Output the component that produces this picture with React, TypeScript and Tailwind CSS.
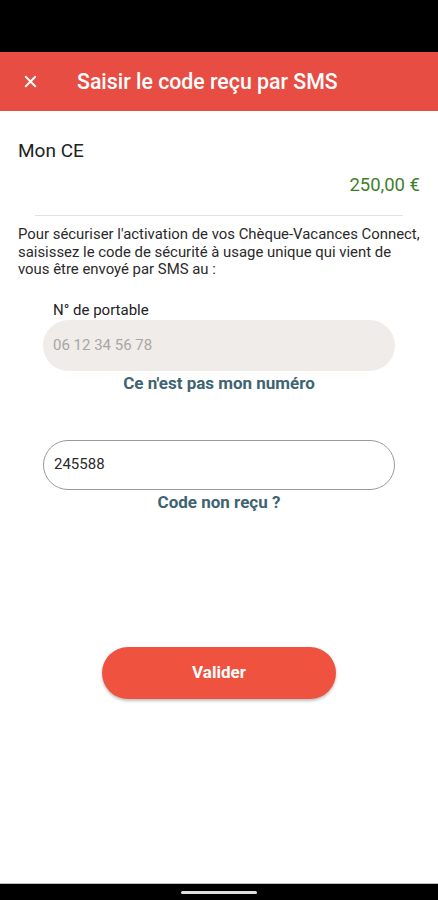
import { X } from 'lucide-react'

export default function App() {
  return (
    <div className="flex h-[900px] w-[438px] flex-col bg-white font-['Roboto',sans-serif] text-[#222]">
      {/* status bar */}
      <div className="h-[52px] bg-black" />

      {/* header */}
      <div className="flex h-[59px] items-center bg-[#e84d43] pl-[21px] text-white">
        <X size={19} strokeWidth={2.4} />
        <h1 className="ml-[37px] text-[21.3px] font-medium">Saisir le code reçu par SMS</h1>
      </div>

      <div className="flex flex-1 flex-col px-[18px]">
        <p className="mt-[29px] text-[19px] leading-[22px] text-[#222]">Mon CE</p>
        <p className="mt-[12px] text-right text-[18.5px] leading-[22px] text-[#3f7f2b]">250,00 €</p>

        <div className="mx-[17px] mt-[19px] h-px bg-[#e2e2e2]" />

        <p className="mt-[10px] text-[14.9px] leading-[17.5px] text-[#2a2a2a]">
          Pour sécuriser l'activation de vos Chèque-Vacances Connect, saisissez le code de sécurité à usage unique qui vient de vous être envoyé par SMS au :
        </p>

        <div className="mx-[25px] mt-[22px] flex flex-col">
          <label className="pl-[10px] text-[15px] leading-[18px] text-[#222]">N° de portable</label>
          <div className="mt-[1px] flex h-[51px] items-center rounded-full bg-[#efecea] px-[10px] text-[15px] text-[#a9a6a4]">
            06 12 34 56 78
          </div>
          <p className="mt-[2px] text-center text-[17px] font-bold leading-[20px] text-[#3e6472]">Ce n'est pas mon numéro</p>

          <div className="mt-[47px] flex h-[50px] items-center rounded-full border border-[#9a9a9a] bg-white px-[10px] text-[15px] text-[#2a2a2a]">
            245588
          </div>
          <p className="mt-[2px] text-center text-[17px] font-bold leading-[20px] text-[#3e6472]">Code non reçu ?</p>
        </div>

        <div className="mt-[135px] flex justify-center">
          <button className="h-[52px] w-[234px] rounded-full bg-[#ef5340] text-[17px] font-bold text-white shadow-[0_2px_3px_rgba(0,0,0,0.25)]">
            Valider
          </button>
        </div>
      </div>

      {/* nav bar */}
      <div className="flex h-[17px] items-center justify-center border-t border-[#bdbdbd] bg-black">
        <div className="h-[3px] w-[76px] rounded-full bg-[#e0e0e0]" />
      </div>
    </div>
  )
}
